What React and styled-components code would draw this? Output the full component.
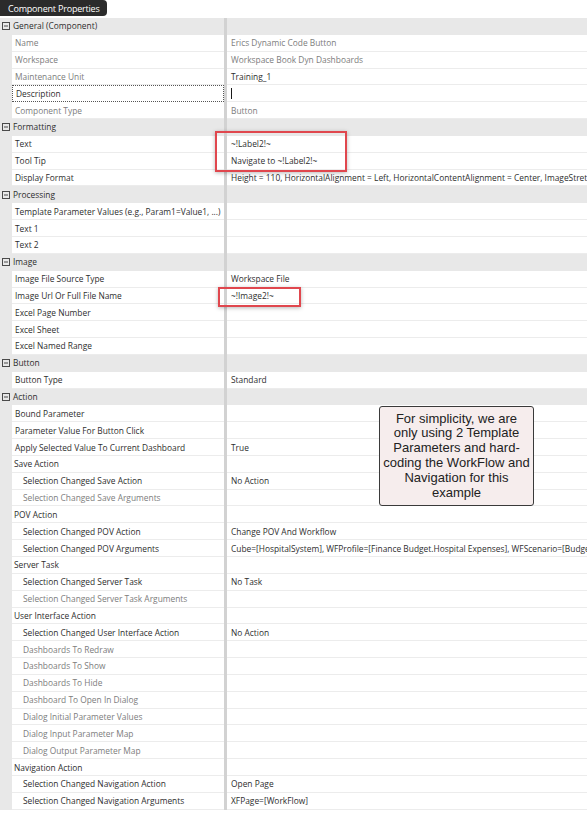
import React from 'react';
import styled, { createGlobalStyle, css } from 'styled-components';

const GlobalStyle = createGlobalStyle`
  body {
    margin: 0;
    background: #ffffff;
    font-family: "Open Sans", "Noto Sans", sans-serif;
  }
`;

const ROW_H = 16.85;

const Page = styled.div`
  width: 587px;
  height: 813px;
  overflow: hidden;
  background: #ffffff;
`;

const Tab = styled.div`
  display: flex;
  align-items: center;
  width: fit-content;
  height: 16px;
  padding: 0 7px 0 8px;
  background: #2b2b2b;
  color: #ffffff;
  font-size: 9px;
  letter-spacing: -0.2px;
  border-radius: 0 4px 4px 0;
`;

const Grid = styled.div`
  position: relative;
  margin-top: 2px;
  width: 100%;
`;

const Row = styled.div`
  display: grid;
  grid-template-columns: 12px 212px 3px 1fr;
  height: ${ROW_H}px;
  font-size: 8.4px;
  background: #e8e8e8;
`;

const Gutter = styled.div`
  display: flex;
  align-items: center;
  justify-content: center;
  background: #e8e8e8;
`;

const Label = styled.div`
  display: flex;
  align-items: center;
  box-sizing: border-box;
  white-space: nowrap;
  overflow: hidden;
  padding-left: ${p => p.$indent}px;
  color: ${p => (p.$dim ? '#7d7d7d' : '#2e2e2e')};
  background: ${p => (p.$header ? '#e8e8e8' : '#ffffff')};
  border-bottom: 1px solid ${p => (p.$header ? '#e8e8e8' : '#ececec')};
  ${p => p.$focused && css`
    border: 1px dotted #555555;
  `}
`;

const Divider = styled.div`
  background: #d2d2d2;
`;

const Value = styled.div`
  display: flex;
  align-items: center;
  box-sizing: border-box;
  padding-left: 4px;
  white-space: nowrap;
  overflow: hidden;
  color: ${p => (p.$dim ? '#7d7d7d' : '#2e2e2e')};
  background: ${p => (p.$header ? '#e8e8e8' : '#ffffff')};
  border-bottom: 1px solid ${p => (p.$header ? '#e8e8e8' : '#ececec')};
`;

const Caret = styled.span`
  display: inline-block;
  width: 1px;
  height: 11px;
  background: #1a1a1a;
`;

const Highlight = styled.div`
  position: absolute;
  box-sizing: border-box;
  border: 2px solid #e0474e;
  box-shadow: 0 1px 4px rgba(0, 0, 0, 0.28);
  pointer-events: none;
`;

const Callout = styled.div`
  position: absolute;
  left: 379px;
  top: 388px;
  width: 155px;
  height: 100px;
  box-sizing: border-box;
  display: flex;
  align-items: center;
  justify-content: center;
  background: #f6eded;
  border: 1px solid #3a3a3a;
  border-radius: 3px;
  font-family: "Liberation Sans", Arial, sans-serif;
  font-size: 13px;
  line-height: 14.8px;
  color: #222222;
  text-align: center;
  white-space: nowrap;
`;

const CollapseIcon = () => (
  <svg width="8" height="8" viewBox="0 0 8 8">
    <rect x="0.5" y="0.5" width="7" height="7" fill="none" stroke="#4a4a4a" />
    <line x1="2" y1="4" x2="6" y2="4" stroke="#4a4a4a" />
  </svg>
);

// kind: 'section' | 'group' | 'item' | 'sub'
const rows = [
  { kind: 'section', label: 'General (Component)' },
  { kind: 'item', label: 'Name', value: 'Erics Dynamic Code Button', dim: true, dimValue: true },
  { kind: 'item', label: 'Workspace', value: 'Workspace Book Dyn Dashboards', dim: true, dimValue: true },
  { kind: 'item', label: 'Maintenance Unit', value: 'Training_1', dim: true },
  { kind: 'item', label: 'Description', focused: true, caret: true },
  { kind: 'item', label: 'Component Type', value: 'Button', dim: true, dimValue: true },
  { kind: 'section', label: 'Formatting' },
  { kind: 'item', label: 'Text', value: '~!Label2!~' },
  { kind: 'item', label: 'Tool Tip', value: 'Navigate to ~!Label2!~' },
  { kind: 'item', label: 'Display Format', value: 'Height = 110, HorizontalAlignment = Left, HorizontalContentAlignment = Center, ImageStretch = Uniform' },
  { kind: 'section', label: 'Processing' },
  { kind: 'item', label: 'Template Parameter Values (e.g., Param1=Value1, ...)' },
  { kind: 'item', label: 'Text 1' },
  { kind: 'item', label: 'Text 2' },
  { kind: 'section', label: 'Image' },
  { kind: 'item', label: 'Image File Source Type', value: 'Workspace File' },
  { kind: 'item', label: 'Image Url Or Full File Name', value: '~!Image2!~' },
  { kind: 'item', label: 'Excel Page Number' },
  { kind: 'item', label: 'Excel Sheet' },
  { kind: 'item', label: 'Excel Named Range' },
  { kind: 'section', label: 'Button' },
  { kind: 'item', label: 'Button Type', value: 'Standard' },
  { kind: 'section', label: 'Action' },
  { kind: 'item', label: 'Bound Parameter' },
  { kind: 'item', label: 'Parameter Value For Button Click' },
  { kind: 'item', label: 'Apply Selected Value To Current Dashboard', value: 'True' },
  { kind: 'group', label: 'Save Action' },
  { kind: 'sub', label: 'Selection Changed Save Action', value: 'No Action' },
  { kind: 'sub', label: 'Selection Changed Save Arguments', dim: true },
  { kind: 'group', label: 'POV Action' },
  { kind: 'sub', label: 'Selection Changed POV Action', value: 'Change POV And Workflow' },
  { kind: 'sub', label: 'Selection Changed POV Arguments', value: 'Cube=[HospitalSystem], WFProfile=[Finance Budget.Hospital Expenses], WFScenario=[Budget], WFTime=[2024]' },
  { kind: 'group', label: 'Server Task' },
  { kind: 'sub', label: 'Selection Changed Server Task', value: 'No Task' },
  { kind: 'sub', label: 'Selection Changed Server Task Arguments', dim: true },
  { kind: 'group', label: 'User Interface Action' },
  { kind: 'sub', label: 'Selection Changed User Interface Action', value: 'No Action' },
  { kind: 'sub', label: 'Dashboards To Redraw', dim: true },
  { kind: 'sub', label: 'Dashboards To Show', dim: true },
  { kind: 'sub', label: 'Dashboards To Hide', dim: true },
  { kind: 'sub', label: 'Dashboard To Open In Dialog', dim: true },
  { kind: 'sub', label: 'Dialog Initial Parameter Values', dim: true },
  { kind: 'sub', label: 'Dialog Input Parameter Map', dim: true },
  { kind: 'sub', label: 'Dialog Output Parameter Map', dim: true },
  { kind: 'group', label: 'Navigation Action' },
  { kind: 'sub', label: 'Selection Changed Navigation Action', value: 'Open Page' },
  { kind: 'sub', label: 'Selection Changed Navigation Arguments', value: 'XFPage=[WorkFlow]' },
];

const indents = { section: 1, group: 2, item: 3, sub: 11 };

function PropertyRow({ row }) {
  const header = row.kind === 'section';
  return (
    <Row>
      <Gutter>{header && <CollapseIcon />}</Gutter>
      <Label
        $header={header}
        $indent={indents[row.kind]}
        $dim={row.dim}
        $focused={row.focused}
      >
        {row.label}
      </Label>
      <Divider />
      <Value $header={header} $dim={row.dimValue}>
        {row.caret ? <Caret /> : row.value}
      </Value>
    </Row>
  );
}

export default function App() {
  return (
    <Page>
      <GlobalStyle />
      <Tab>Component Properties</Tab>
      <Grid>
        {rows.map((row, i) => (
          <PropertyRow key={i} row={row} />
        ))}
        <Highlight style={{ left: 215, top: 113, width: 132, height: 41 }} />
        <Highlight style={{ left: 218, top: 269, width: 83, height: 20 }} />
        <Callout>
          <div>
            For simplicity, we are<br />
            only using 2 Template<br />
            Parameters and hard-<br />
            coding the WorkFlow and<br />
            Navigation for this<br />
            example
          </div>
        </Callout>
      </Grid>
    </Page>
  );
}
